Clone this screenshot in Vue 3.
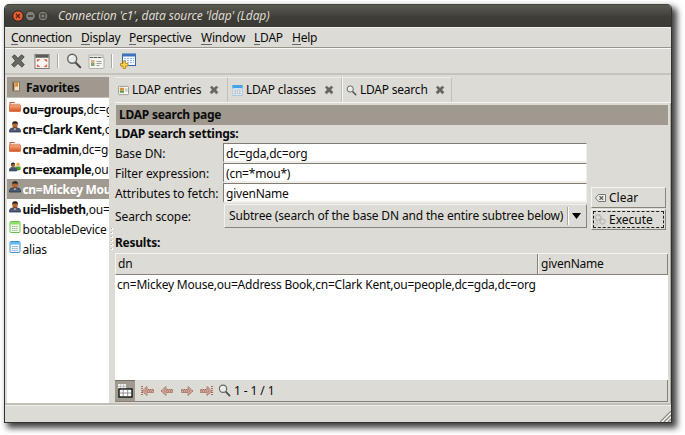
<script setup>
const menus = [['C', 'onnection', 'm-conn'], ['D', 'isplay', 'm-disp'], ['P', 'erspective', 'm-pers'], ['W', 'indow', 'm-win'], ['L', 'DAP', 'm-ldap'], ['H', 'elp', 'm-help']]
const favorites = [
  { icon: 'folder', b: 'ou=groups', r: ',dc=g' },
  { icon: 'person', b: 'cn=Clark Kent', r: ',o' },
  { icon: 'folder', b: 'cn=admin', r: ',dc=gd' },
  { icon: 'group', b: 'cn=example', r: ',ou' },
  { icon: 'person', b: 'cn=Mickey Mou', r: '', selected: true },
  { icon: 'person', b: 'uid=lisbeth', r: ',ou=' },
  { icon: 'green', b: '', r: 'bootableDevice' },
  { icon: 'blue', b: '', r: 'alias' },
]
const tabs = [
  { icon: 'card', label: 'LDAP entries', cls: 't-entries' },
  { icon: 'table', label: 'LDAP classes', cls: 't-classes' },
  { icon: 'lens', label: 'LDAP search', cls: 't-search' },
]
const fields = [
  { label: 'Base DN:', value: 'dc=gda,dc=org' },
  { label: 'Filter expression:', value: '(cn=*mou*)' },
  { label: 'Attributes to fetch:', value: 'givenName' },
]
</script>

<template>
  <svg class="defs" width="0" height="0">
    <defs>
      <linearGradient id="og" x1="0" y1="0" x2="0" y2="1"><stop offset="0" stop-color="#f9b088" /><stop offset="1" stop-color="#d4501c" /></linearGradient>
      <symbol id="i-folder" viewBox="0 0 12 12"><path d="M.5 1h5l1 1.5h4V6H.5z" fill="#c0603e" /><rect x="1.5" y="2" width="9" height="3" fill="#f6e4da" /><rect x=".5" y="3.8" width="11" height="6.7" rx=".6" fill="url(#og)" stroke="#cf6034" stroke-width=".7" /></symbol>
      <symbol id="i-person" viewBox="0 0 12 12"><path d="M.5 11V9.4Q.7 7.4 3.6 7h4.8q2.9.4 3.1 2.4V11z" fill="#4d5b76" stroke="#273247" stroke-width=".8" /><path d="M4.5 7h3L6 9.2z" fill="#e8e8ea" /><ellipse cx="6" cy="4.3" rx="2.6" ry="3.2" fill="#b6652e" /><path d="M3 4.3Q2.6.4 6 .2t3 4.1L8.2 2.6H3.8z" fill="#24201e" /><path d="M4.5 6q1.5 1.4 3 0v1.2h-3z" fill="#3a241a" /></symbol>
      <symbol id="i-group" viewBox="0 0 12 12"><path d="M6 5.5h5.5V9l-4 .8z" fill="#4e9a32" /><circle cx="9" cy="3.4" r="1.8" fill="#e8b04e" /><path d="M.5 10V7.8q1-1.6 3.5-1.6T7.6 8v2z" fill="#455572" stroke="#27354c" stroke-width=".6" /><circle cx="4" cy="4.2" r="2" fill="#ad612f" /><path d="M1.8 4Q2 1.3 4.2 1.5T6.2 4L5 3z" fill="#282120" /></symbol>
      <symbol id="i-green" viewBox="0 0 12 12"><rect x="1" y=".5" width="10" height="11" rx="1" fill="#effae9" stroke="#6cbf4f" /><path d="M1.5 1h9v2.5h-9z" fill="#8ce064" /><path d="M3 5.5h6M3 7.5h6M3 9.5h6" stroke="#9bb892" stroke-dasharray="1.5 .6" /></symbol>
      <symbol id="i-blue" viewBox="0 0 12 12"><rect x="1" y=".5" width="10" height="11" rx="1" fill="#eff8fe" stroke="#3f91ce" /><path d="M1.5 1h9v2.5h-9z" fill="#62b8f0" /><path d="M3 5.5h6M3 7.5h6M3 9.5h6" stroke="#92abc0" stroke-dasharray="1.5 .6" /></symbol>
      <symbol id="i-table" viewBox="0 0 12 12"><rect x="1" y=".5" width="10" height="11" fill="#f7f9fa" stroke="#9fc4e0" /><path d="M.5 0h11v3.5H.5z" fill="#45a3e8" /><path d="M2.5 5.5h7M2.5 7.5h7M2.5 9.5h7" stroke="#8f9ba5" stroke-dasharray="2 .6" /></symbol>
      <symbol id="i-card" viewBox="0 0 12 12"><rect x=".5" y="1.5" width="11" height="9" rx="1" fill="#faf9f4" stroke="#96958e" /><rect x="2" y="3" width="4.5" height="3" fill="#e28a29" /><rect x="2" y="6" width="4.5" height="2.5" fill="#5c9e42" /><path d="M7.5 4.5h3M7.5 6.5h3" stroke="#a3a39e" /></symbol>
      <symbol id="i-lens" viewBox="0 0 16 16"><path d="M9.5 9.5l4.7 4.8" stroke="#4a4d49" stroke-width="2.1" stroke-linecap="round" /><circle cx="6.2" cy="5.8" r="4.5" fill="#e9ebe8" stroke="#64665f" stroke-width="1.4" /><path d="M3.6 5.4q.6-2 2.6-2.1" fill="none" stroke="#fff" /></symbol>
      <symbol id="i-x" viewBox="0 0 14 14"><path d="M2 3.2 4 1.6l3 3.1 3-3.1 2.4 1.7L9.4 6.8l3.1 3.5-2.2 2-3.3-3.2-3.2 3.2-2.3-2 3.2-3.5z" fill="#686963" stroke="#494b45" stroke-width=".8" /></symbol>
      <symbol id="i-arrow" viewBox="0 0 14 12"><path d="M1 6 6 1.5v3h6.5v3H6v3z" fill="#cfa598" stroke="#9c6a58" stroke-dasharray="1.4 .7" /><path d="M4 6h7" stroke="#9a6b5d" stroke-dasharray="1 1" /></symbol>
    </defs>
  </svg>
  <div class="desk">
  <div class="window">
    <header class="title">
      <svg class="wm" viewBox="0 0 37 12">
        <circle cx="6" cy="6" r="5.2" fill="#ed5d30" stroke="#292822" /><path d="M4 4l4 4m0-4L4 8" stroke="#5e2513" stroke-width="1.4" />
        <circle cx="18.5" cy="6" r="5" fill="#817f76" stroke="#2f2e29" /><path d="M16 6h5" stroke="#383731" stroke-width="1.3" />
        <circle cx="31" cy="6" r="5" fill="#817f76" stroke="#2f2e29" /><rect x="29" y="4" width="4" height="4" fill="none" stroke="#383731" />
      </svg>
      <span class="caption">Connection 'c1', data source 'ldap' (Ldap)</span>
    </header>
    <nav class="menu"><span v-for="m in menus" :key="m[0]" :class="m[2]"><u>{{ m[0] }}</u>{{ m[1] }}</span></nav>
    <div class="toolbar">
      <svg class="tx"><use href="#i-x" /></svg>
      <svg class="full" viewBox="0 0 16 16"><rect x=".5" y=".5" width="15" height="15" fill="#f7f3f1" stroke="#77736e" /><path d="M1 1h14v3H1z" fill="#5c5a57" /><path d="M3 8V6h2.5zM13 8V6h-2.5zM3 11.5v2h2.5zM13 11.5v2h-2.5z" fill="#e3513e" stroke="#e3513e" stroke-width=".7" /><path d="M6 9h4v2H6z" fill="#fff" /></svg>
      <i class="sep"></i>
      <svg class="lens"><use href="#i-lens" /></svg>
      <svg class="idcard" viewBox="0 0 17 15"><path d="M1 1h14v3H1z" fill="#e8e8e4" stroke="#b5b4ae" /><rect x="1" y="3.5" width="15" height="11" rx="1" fill="#f4f4f1" stroke="#b2b2ac" /><path d="M2 3.5h11" stroke="#585853" stroke-dasharray="3 1" /><rect x="3" y="6" width="3.5" height="3" fill="#dcae86" /><rect x="3" y="9" width="3.5" height="3" fill="#7fa56d" /><path d="M8.5 7.5h5M8.5 9.5h5M8.5 11.5h3" stroke="#9d9d98" /></svg>
      <i class="sep second"></i>
      <svg class="newtab" viewBox="0 0 16 16"><rect x="2.5" y="1" width="13" height="11.5" fill="#f6faff" stroke="#3767a8" /><path d="M2.5 1h13v2.5h-13z" fill="#3d73bd" /><path d="M4 5.5h10M4 7.5h10M4 9.5h10" stroke="#9dbbe2" stroke-dasharray="2 1" /><path d="M3 8h2.5v2.5H8V13H5.5v2.5H3V13H.5v-2.5H3z" fill="#f9d34b" stroke="#b87d12" stroke-width=".8" /></svg>
    </div>
    <main class="body">
      <aside class="side">
        <div class="fav-head">
          <svg class="book" viewBox="0 0 10 12"><path d="M.5.5h9v11h-9z" fill="#f0e5cf" stroke="#73593c" /><path d="M1 1h2v10H1z" fill="#76502c" /><path d="M4 1h3.5v6L5.7 5.6 4 7z" fill="#db8a25" /></svg>
          <b>Favorites</b>
        </div>
        <div v-for="f in favorites" :key="f.b + f.r" class="fav" :class="{ sel: f.selected }">
          <svg class="fi"><use :href="'#i-' + f.icon" /></svg>
          <span class="ft"><b v-if="f.b">{{ f.b }}</b>{{ f.r }}</span>
        </div>
      </aside>
      <div class="grip"><i v-for="n in 6" :key="n"></i></div>
      <section class="page">
        <div class="tabs">
          <div v-for="t in tabs" :key="t.label" class="tab" :class="t.cls">
            <svg class="ti"><use :href="'#i-' + t.icon" /></svg><span>{{ t.label }}</span><svg class="close"><use href="#i-x" /></svg>
          </div>
        </div>
        <div class="content">
          <h1>LDAP search page</h1>
          <h2 class="settings">LDAP search settings:</h2>
          <div class="form">
            <div class="rows">
              <div v-for="f in fields" :key="f.label" class="row"><label>{{ f.label }}</label><div class="input">{{ f.value }}</div></div>
              <div class="row scope"><label>Search scope:</label>
                <div class="combo"><span>Subtree (search of the base DN and the entire subtree below)</span><i class="cs"></i><svg class="down" viewBox="0 0 9 6"><path d="M0 0h9L4.5 6z" /></svg></div>
              </div>
            </div>
            <div class="buttons">
              <div class="btn"><svg class="clr" viewBox="0 0 11 8"><path d="M3.5.5h7v7h-7L.5 4z" fill="#eee" stroke="#777872" /><path d="M4.5 2.2l3.6 3.6m0-3.6L4.5 5.8" stroke="#60615c" stroke-width="1.3" /></svg><span>Clear</span></div>
              <div class="btn focus"><svg class="gear" viewBox="0 0 12 12"><g fill="none" stroke="#aaa9a4" stroke-dasharray="1 .7"><circle cx="4" cy="3.5" r="2.7" stroke-width="1.6" /><circle cx="8.5" cy="7.5" r="2.4" stroke-width="1.5" /><circle cx="2.6" cy="9.5" r="1.5" /></g></svg><span>Execute</span></div>
            </div>
          </div>
          <h2 class="results">Results:</h2>
          <div class="thead"><div class="th dn">dn</div><div class="th gn">givenName</div></div>
          <div class="tbody"><span>cn=Mickey Mouse,ou=Address Book,cn=Clark Kent,ou=people,dc=gda,dc=org</span></div>
          <div class="pager">
            <div class="toggle"><svg viewBox="0 0 15 14"><path d="M0 0h8v5H0z" fill="#eee" /><path d="M0 2.5h8M2.5 0v5M5.5 0v5" stroke="#aaa" stroke-width=".6" /><rect x="1" y="5" width="13" height="8" fill="#fff" stroke="#111" stroke-width="1.4" /><path d="M5.2 6v6M9.7 6v6M2 9h11" stroke="#777" stroke-width=".8" /></svg></div>
            <svg class="ar" viewBox="0 0 14 12"><use href="#i-arrow" width="14" height="12" /><path d="M1 1v10" stroke="#a1705f" stroke-width="2" stroke-dasharray="1 1" /></svg>
            <svg class="ar"><use href="#i-arrow" /></svg>
            <svg class="ar flip"><use href="#i-arrow" /></svg>
            <svg class="ar flip" viewBox="0 0 14 12"><use href="#i-arrow" width="14" height="12" /><path d="M1 1v10" stroke="#a1705f" stroke-width="2" stroke-dasharray="1 1" /></svg>
            <svg class="plens"><use href="#i-lens" /></svg><span class="count">1 - 1 / 1</span>
          </div>
        </div>
      </section>
    </main>
    <footer class="status"><svg viewBox="0 0 11 11"><path d="M0 11 11 0M4 11l7-7M8 11l3-3" stroke="#8b887f" stroke-width="1.2" /><path d="M2 11l9-9M6 11l5-5" stroke="#fff" /></svg></footer>
  </div>
  </div>
</template>

<style>
html { background: #fff; }
body { margin: 0; }
</style>
<style scoped>
* { box-sizing: border-box; }
.desk { height: 435px; padding: 4px 0 0 4px; overflow: hidden; }
.defs { position: absolute; }
svg { display: block; flex: none; }
.window { width: 668px; height: 419px; border: 1px solid #32332e; border-top: 0; border-radius: 5px 5px 0 0; background: #dcdbd5; box-shadow: 4px 4px 6px 1px rgba(0, 0, 0, .75); display: flex; flex-direction: column; overflow: hidden; font: 12px/16px "Noto Sans", "Open Sans", sans-serif; letter-spacing: -.22px; color: #0b0b0b; white-space: nowrap; }
.title { height: 23px; flex: none; background: linear-gradient(#5c5b53, #3e3d37 55%, #3b3a35); border-top: 1px solid #45453e; display: flex; align-items: center; color: #dfdbd2; font-style: italic; }
.wm { width: 37px; height: 12px; margin-left: 7px; }
.caption { margin-left: 9px; letter-spacing: -.13px; }
.menu { height: 21px; flex: none; border-top: 1px solid #f3f2ef; border-bottom: 1px solid #98958d; padding: 0 0 0 6px; display: flex; align-items: center; }
.menu span { flex: none; margin-right: 9px; }
.menu u { text-decoration: none; box-shadow: inset 0 -1px #666; display: inline-block; line-height: 14px; }
.m-conn { width: 61px; letter-spacing: -.35px; } .m-disp { width: 39px; } .m-pers { width: 63px; } .m-win { width: 44px; } .m-ldap { width: 29px; }
.toolbar { height: 27px; flex: none; border-top: 1px solid #f8f8f6; border-bottom: 2px solid #c5c3bc; display: flex; align-items: center; padding-left: 5px; }
.tx { width: 16px; height: 16px; }
.full { width: 16px; height: 15px; margin-left: 8px; }
.sep { width: 2px; height: 14px; background: #aaa79f; border-right: 1px solid #fff; margin-left: 7px; }
.lens { width: 16px; height: 16px; margin-left: 7px; }
.idcard { width: 17px; height: 15px; margin-left: 6px; }
.sep.second { margin-left: 6px; }
.newtab { width: 16px; height: 16px; margin-left: 7px; }
.body { height: 330px; flex: none; display: flex; padding: 2px 0 0 2px; border-bottom: 2px solid #c0beb7; }
.side { width: 102px; height: 326px; background: #fff; overflow: hidden; flex: none; }
.fav-head { height: 20px; margin-bottom: 2px; background: #9f998f; display: flex; padding-left: 5px; align-items: center; outline: 1px solid #c1beb7; }
.fav-head b { line-height: 20px; padding-top: 1px; }
.book { width: 8px; height: 11px; margin-right: 6px; margin-top: -2px; }
.fav { height: 20px; display: flex; padding: 0 0 0 1.5px; }
.fi { width: 12px; height: 12px; margin-top: 2px; }
.ft { margin-left: 2px; line-height: 21px; }
.ft b { letter-spacing: -.32px; }
.sel { background: #9f998f; color: #fff; }
.grip { width: 6px; flex: none; display: flex; flex-direction: column; align-items: center; padding: 151px 0 0; gap: 2px; }
.grip i { width: 2px; height: 2px; background: #aaa8a1; border-right: 1px solid #fff; border-bottom: 1px solid #fff; flex: none; }
.page { width: 556px; flex: none; }
.tabs { height: 26px; display: flex; border-bottom: 1px solid #f3f3ef; }
.tab { height: 25px; display: flex; align-items: center; border-top: 1px solid #eeeee9; border-right: 1px solid #c2c0b8; }
.t-entries { width: 113px; padding-left: 3px; } .t-classes { width: 114px; padding-left: 4px; } .t-search { width: 110px; padding-left: 3px; border-left: 1px solid #f4f4ef; background: #dcdbd5; }
.ti { width: 11px; height: 11px; margin-right: 3px; }
.tab .close { width: 10px; height: 10px; margin-left: 8px; }
.t-search .close { margin-left: 7px; }
.content { border-right: 1px solid #aaa79e; padding: 2px 2px 0 0; height: 300px; }
h1, h2 { margin: 0; font-size: 12px; font-weight: 700; letter-spacing: -.25px; }
h1 { height: 20px; line-height: 20px; background: #9f998f; padding-left: 3px; margin-left: 1px; }
.settings { height: 18px; line-height: 18px; }
.form { display: flex; height: 90px; }
.rows { width: 472px; }
.row { height: 20px; display: flex; align-items: flex-start; }
.row label { width: 108px; line-height: 21px; letter-spacing: -.1px; }
.input { width: 364px; height: 20px; background: #fff; border: 1px solid #817c72; border-bottom: 2px solid #efeee9; border-right-color: #efeee9; padding-left: 2px; line-height: 19px; flex: none; }
.scope { height: 26px; margin-top: 1px; }
.scope label { line-height: 26px; }
.combo { width: 363px; height: 24px; margin-left: 1px; border: 1px solid; border-color: #f3f2ee #89857b #89857b #f3f2ee; display: flex; align-items: center; padding-left: 4px; flex: none; }
.combo span { width: 337px; flex: none; letter-spacing: -.16px; }
.cs { width: 2px; height: 18px; border-left: 1px solid #aba79d; border-right: 1px solid #fff; margin-left: 1px; }
.down { width: 9px; height: 6px; margin-left: 3px; }
.buttons { padding: 44px 0 0 4px; display: flex; flex-direction: column; gap: 1px; }
.btn { width: 75px; height: 21px; border: 1px solid; border-color: #f5f4f1 #89857b #89857b #f5f4f1; display: flex; align-items: center; padding-left: 3px; letter-spacing: 0; }
.btn span { margin-left: 3px; }
.btn.focus { outline: 1px dashed #222; outline-offset: -3px; }
.clr { width: 11px; height: 8px; }
.gear { width: 12px; height: 12px; margin-left: -1px; }
.results { height: 20px; line-height: 20px; }
.thead { height: 22px; display: flex; border-top: 1px solid #f4f4f0; border-bottom: 1px solid #858176; border-left: 1px solid #f4f4f0; }
.th { line-height: 20px; padding-left: 2px; border-right: 1px solid #858176; }
.dn { width: 422px; }
.gn { flex: 1; border-left: 1px solid #f4f4f0; }
.tbody { height: 105px; background: #fff; padding: 2px 0 0 2px; }
.pager { height: 22px; display: flex; align-items: center; border-bottom: 1px solid #858176; border-right: 1px solid #858176; }
.toggle { width: 20px; height: 21px; background: #9f998f; border-top: 1px solid #777268; padding: 3px 0 0 3px; }
.toggle svg { width: 15px; height: 14px; }
.ar { width: 14px; height: 12px; margin-left: 5.5px; }
.flip { transform: scaleX(-1); }
.plens { width: 13px; height: 13px; margin-left: 5px; }
.count { margin-left: 3px; letter-spacing: -.1px; }
.status { flex: 1; display: flex; justify-content: flex-end; align-items: flex-end; border-top: 1px solid #eeede8; }
.status svg { width: 11px; height: 11px; }
</style>
